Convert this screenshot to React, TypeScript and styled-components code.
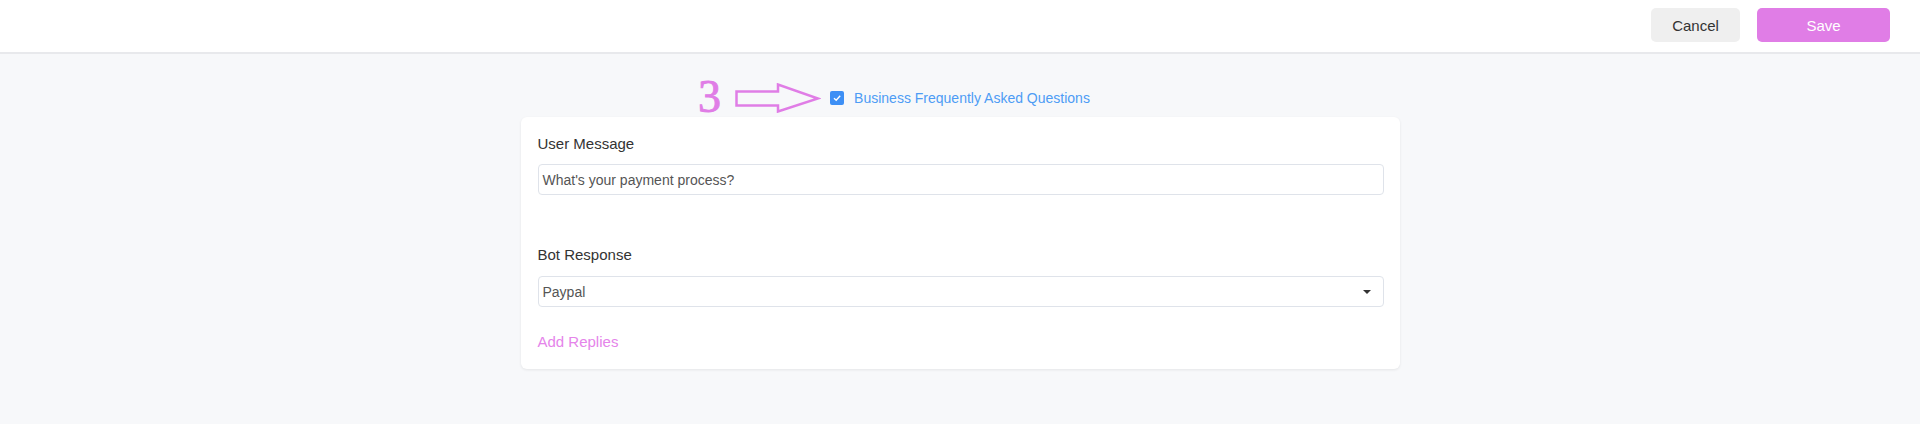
import React from "react";
import styled, { createGlobalStyle } from "styled-components";

const GlobalStyle = createGlobalStyle`
  html, body {
    margin: 0;
    padding: 0;
    background: #f7f8fa;
    font-family: "Liberation Sans", Arial, sans-serif;
  }
  * { box-sizing: border-box; }
`;

const Page = styled.div`
  min-height: 424px;
  background: #f7f8fa;
`;

const Header = styled.header`
  height: 54px;
  background: #ffffff;
  border-bottom: 2px solid #e8e9ec;
  display: flex;
  justify-content: flex-end;
  align-items: flex-start;
  gap: 17px;
  padding: 8px 30px 0 0;
`;

const Button = styled.button<{ $primary?: boolean; $w: number }>`
  width: ${(p) => p.$w}px;
  height: 34px;
  border: none;
  border-radius: 5px;
  font-family: "Liberation Sans", Arial, sans-serif;
  font-size: 15px;
  cursor: pointer;
  background: ${(p) => (p.$primary ? "#e07de6" : "#efefef")};
  color: ${(p) => (p.$primary ? "#ffffff" : "#333333")};
`;

const Main = styled.main`
  display: flex;
  flex-direction: column;
  align-items: center;
  padding-top: 34px;
  gap: 9px;
`;

const CheckRow = styled.label`
  position: relative;
  display: inline-flex;
  align-items: center;
  gap: 10px;
  height: 20px;
  font-size: 14px;
  color: #4d9cf5;
  cursor: pointer;
`;

const CheckBox = styled.span`
  width: 14px;
  height: 14px;
  border-radius: 2px;
  background: #3d8ff5;
  display: inline-flex;
  align-items: center;
  justify-content: center;
`;

const Annotation = styled.div`
  position: absolute;
  right: 100%;
  margin-right: 9px;
  top: -14px;
  height: 46px;
  display: flex;
  align-items: flex-start;
  gap: 14px;
  color: #e07de6;
`;

const Digit = styled.span`
  font-family: "Liberation Serif", "Times New Roman", serif;
  font-size: 46px;
  line-height: 46px;
  -webkit-text-stroke: 0.9px #e07de6;
`;

const ArrowSvg = styled.svg`
  margin-top: 9px;
  display: block;
`;

const Card = styled.section`
  width: 879px;
  background: #ffffff;
  border-radius: 6px;
  box-shadow: 0 1px 3px rgba(0, 0, 0, 0.08);
  padding: 18px 16px 18px 17px;
  display: flex;
  flex-direction: column;
`;

const Label = styled.div<{ $top?: number }>`
  font-size: 15px;
  line-height: 18px;
  color: #333333;
  margin-top: ${(p) => p.$top ?? 0}px;
`;

const Field = styled.div<{ $top?: number }>`
  position: relative;
  height: 31px;
  margin-top: ${(p) => p.$top ?? 0}px;
  border: 1px solid #dfe3ea;
  border-radius: 4px;
  display: flex;
  align-items: center;
  padding: 0 12px 0 4px;
  font-size: 14px;
  color: #555555;
`;

const FieldText = styled.span`
  flex: 1;
`;

const Caret = styled.span`
  width: 0;
  height: 0;
  border-left: 4px solid transparent;
  border-right: 4px solid transparent;
  border-top: 4px solid #333333;
`;

const AddLink = styled.a`
  margin-top: 26px;
  font-size: 15px;
  line-height: 18px;
  color: #e584ea;
  text-decoration: none;
  cursor: pointer;
`;

export default function App() {
  return (
    <Page>
      <GlobalStyle />
      <Header>
        <Button $w={89}>Cancel</Button>
        <Button $w={133} $primary>
          Save
        </Button>
      </Header>
      <Main>
        <CheckRow>
          <Annotation>
            <Digit>3</Digit>
            <ArrowSvg width="86" height="30" viewBox="0 0 86 30">
              <path
                d="M1.5 8.5 H43 V1.5 L83 15.5 L43 28.5 V22.5 H1.5 Z"
                fill="none"
                stroke="#e07de6"
                strokeWidth="2.5"
                strokeLinejoin="miter"
              />
            </ArrowSvg>
          </Annotation>
          <CheckBox>
            <svg width="10" height="10" viewBox="0 0 10 10">
              <path d="M2 5.2 L4.2 7.2 L8.2 2.8" fill="none" stroke="#fff" strokeWidth="1.4" />
            </svg>
          </CheckBox>
          Business Frequently Asked Questions
        </CheckRow>
        <Card>
          <Label>User Message</Label>
          <Field $top={11}>
            <FieldText>What's your payment process?</FieldText>
          </Field>
          <Label $top={51}>Bot Response</Label>
          <Field $top={12}>
            <FieldText>Paypal</FieldText>
            <Caret />
          </Field>
          <AddLink>Add Replies</AddLink>
        </Card>
      </Main>
    </Page>
  );
}
